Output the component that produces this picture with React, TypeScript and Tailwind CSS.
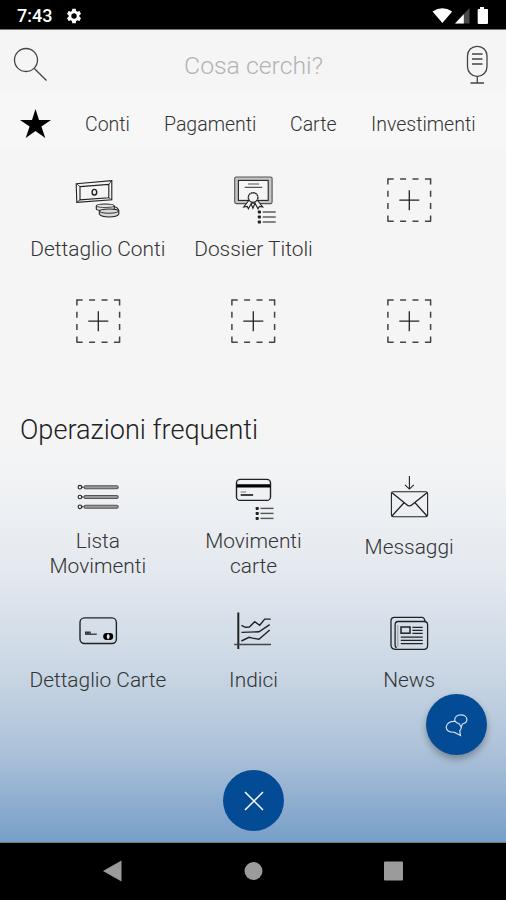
import type { ReactNode } from "react";

function Icon({ children }: { children: ReactNode }) {
  return (
    <svg width="60" height="60" viewBox="0 0 60 60" fill="none" stroke="#222" strokeWidth="1.1" className="block shrink-0">
      {children}
    </svg>
  );
}

function Tile({ icon, label, gap = "pt-[7px]" }: { icon: ReactNode; label?: ReactNode; gap?: string }) {
  return (
    <div className="flex flex-col items-center">
      {icon}
      {label && <div className={`${gap} text-center text-[20.9px] leading-[25px] font-light whitespace-nowrap text-[#333]`}>{label}</div>}
    </div>
  );
}

const AddIcon = () => (
  <Icon>
    <g strokeDasharray="6 6.4" stroke="#444" strokeWidth="1.5">
      <path d="M8.7 8.9H52M8.7 51.2H52" />
      <path d="M8.9 8.5V51.5M51.6 8.5V51.5" strokeDasharray="6 6.3" />
    </g>
    <path d="M20.3 30.2H40.3M30.3 20.2V40.2" stroke="#222" strokeWidth="1.3" />
  </Icon>
);

const MoneyIcon = () => (
  <Icon>
    <path d="M8.2 13.8 43.8 10.6V29.8L8.8 32.4Z" />
    <path d="M12 16.600 40.800 14.400V27.800L12 29.800Z" />
    <path d="m8.600 13.800 3.400 2.800M43.600 10.800l-2.800 3.600M43.600 29.800l-2.800-2M8.800 32.300l3.200-2.500" strokeWidth=".8" />
    <ellipse cx="26.400" cy="22.200" rx="2.300" ry="2.800" strokeWidth="1.4" />
    <path d="M28.300 36c0-2.600 18-2.600 18 0v3c0 2-18 2-18 0Z" fill="#e4e4e4" />
    <path d="M28.600 36.400c3 1.500 14 1.500 17.500 0" strokeWidth=".8" />
    <path d="M31.300 41c1-2.500 18-3 19.500 0v3c-2 4-17 4-19.500 0Z" fill="#d8d8d8" />
    <path d="M31.800 41.800c4 2 15 2 18.600-.3" strokeWidth=".9" />
    <path d="M45.800 36.500c3 .6 4.700 2 5 4.500" />
  </Icon>
);

const BulletRows = ({ x, y, step }: { x: number; y: number; step: number }) => (
  <>
    {[0, 1, 2].map((i) => (
      <g key={i}>
        <rect x={x - 1.6} y={y + i * step - 1.5} width="3.2" height="3" rx=".8" fill="#222" stroke="none" />
        <path d={`M${x + 3.3} ${y + i * step}h13`} strokeWidth="1.4" stroke="#555" />
      </g>
    ))}
  </>
);

const CertificateIcon = () => (
  <Icon>
    <g transform="translate(.7 0)">
      <rect x="11" y="7" width="37.4" height="26.6" rx="1.5" fill="#c4c4c4" stroke="#555" />
      <rect x="14.7" y="10.4" width="29.8" height="20" fill="#f5f5f5" />
      <path d="M24.3 14h11M21 17.4h17.5" strokeWidth="1.2" stroke="#555" />
      <path d="m25.5 30-5.5 7 3.5-.6 1.2 2.4 3.5-6.6M33.5 30l5.5 7-3.3-.6-1.4 2.4-3.5-6.6M27.5 34l1.7 4.3L31 34" fill="#f5f5f5" strokeWidth="1.1" />
      <circle cx="29.4" cy="27.5" r="4.8" fill="#f5f5f5" strokeWidth="1.4" strokeDasharray="1.8 .4" />
      <BulletRows x={35.7} y={42} step={5} />
    </g>
  </Icon>
);

const ListIcon = () => (
  <Icon>
    {[20.2, 30, 39.8].map((y) => (
      <g key={y}>
        <circle cx="11.9" cy={y} r="1.8" />
        <path d={`M13.7 ${y}h2`} />
        <rect x="16" y={y - 1.5} width="34.2" height="3" rx="1.5" fill="#999" stroke="#555" />
      </g>
    ))}
  </Icon>
);

const CardMovesIcon = () => (
  <Icon>
    <g transform="translate(.7 0)">
      <rect x="12.8" y="12.4" width="34" height="21" rx="3.5" strokeWidth="1.4" />
      <path d="M12.8 18.8h34" strokeWidth="3.2" stroke="#000" />
      <path d="M17 25h5.5" stroke="#888" />
      <path d="M17 28h12.4" strokeWidth="1.7" />
      <BulletRows x={33.5} y={41.4} step={5} />
    </g>
  </Icon>
);

const MailIcon = () => (
  <Icon>
    <path d="M30.4 9V21.9M26 17.8l4.4 4.300 4.400-4.300" />
    <rect x="12.400" y="24.700" width="36.200" height="25" rx="1.800" />
    <path d="m13 25.700 14.500 11.800q2.900 2.800 5.800 0L48 25.700M13 49 25 35.700M48 49 36 35.700" strokeWidth="1.3" />
  </Icon>
);

const CardIcon = () => (
  <Icon>
    <rect x="12" y="14.9" width="36.4" height="25.6" rx="4.5" strokeWidth="1.4" />
    <path d="M17 29.6h5.7" strokeWidth="2.4" strokeDasharray="1.8 .3" />
    <path d="M17 31.2h11.8" strokeWidth="1.2" />
    <ellipse cx="38.6" cy="33.5" rx="3.4" ry="3.4" fill="#000" stroke="none" />
    <ellipse cx="41.8" cy="33.5" rx="3.4" ry="3.4" fill="#000" stroke="none" />
    <ellipse cx="40.2" cy="33.5" rx="1.4" ry="2.5" fill="#dfe6ee" stroke="none" />
  </Icon>
);

const ChartIcon = () => (
  <Icon>
    <g transform="translate(.7 0)">
      <path d="M14.6 9.5V46" strokeWidth="2" />
      <path d="M10.5 41.5H47.3" stroke="#444" strokeWidth="1.3" />
      <path d="m17.7 22.3 4 2 4-.2 5.3-5.4 5 3.6 5-6.2h6M17.7 29.4l17.6-.6L46 21.6M17.7 38l7.6-3.7 3.7.8 6.3 1.2L46 27" strokeWidth="1.4" />
    </g>
  </Icon>
);

const NewsIcon = () => (
  <Icon>
    <path d="M16 46.3q-4-.5-4-4V18q0-3.7 3.5-3.7H43q2.4 0 3 4M17.7 44.5q-1.6 0-1.6-3V22q0-3.5 3-3.5H45q3.6 0 3.6 3.5v20.5q0 3.8-3.6 3.8H15.5" strokeWidth="1.3" />
    <path d="M18.8 22v21.5" strokeWidth=".8" stroke="#888" />
    <rect x="22" y="24" width="9" height="6.2" strokeWidth="1.5" />
    <path d="M33.4 24.4h10.3M33.4 27.4h10.3M33.4 30.4h10.3M21.8 34.2h22M21.8 37.4h22M21.8 40.6h22" strokeWidth="1.3" />
  </Icon>
);

function StatusBar() {
  return (
    <div className="flex h-[30px] shrink-0 items-center border-b border-[#777] bg-black pt-[3px] pl-[17px] text-white">
      <span className="w-[35px] text-[18px] leading-none font-medium">7:43</span>
      <svg className="ml-[13px]" width="18" height="18" viewBox="0 0 24 24" fill="#fff">
        <path d="M19.14 12.94c.04-.3.06-.61.06-.94 0-.32-.02-.64-.07-.94l2.03-1.58a.49.49 0 0 0 .12-.61l-1.92-3.32a.49.49 0 0 0-.59-.22l-2.39.96c-.5-.38-1.03-.7-1.62-.94l-.36-2.54a.48.48 0 0 0-.48-.41h-3.84a.48.48 0 0 0-.47.41l-.36 2.54c-.59.24-1.13.57-1.62.94l-2.39-.96a.48.48 0 0 0-.59.22L2.74 8.87a.48.48 0 0 0 .12.61l2.03 1.58c-.05.3-.09.63-.09.94s.02.64.07.94l-2.03 1.58a.49.49 0 0 0-.12.61l1.92 3.32c.12.22.37.29.59.22l2.39-.96c.5.38 1.03.7 1.62.94l.36 2.54c.05.24.24.41.48.41h3.84c.24 0 .44-.17.47-.41l.36-2.54c.59-.24 1.13-.56 1.62-.94l2.39.96c.22.08.47 0 .59-.22l1.92-3.32a.48.48 0 0 0-.12-.61l-2.01-1.58zM12 15.6a3.6 3.6 0 1 1 0-7.2 3.6 3.6 0 0 1 0 7.2z" />
      </svg>
      <svg className="mr-[15px] ml-auto" width="60" height="20" viewBox="0 0 60 20">
        <path d="M1.5 5.5Q11.3-1 21.2 5.5L11.4 17Z" fill="#fff" />
        <path d="M38.5 2V17.5H24Z" fill="#4a4a4a" />
        <path d="M32.8 8.2V17.5H24Z" fill="#fff" />
        <path d="M49 1h4v2h3.2q.8 0 .8.8V17q0 1-1 1H47.7q-1 0-1-1V3.8q0-.8.8-.8H49Z" fill="#fff" />
      </svg>
    </div>
  );
}

export default function App() {
  return (
    <div className="relative flex h-[900px] w-[506px] flex-col overflow-hidden bg-[#f5f5f5] font-['Roboto',sans-serif]">
      <StatusBar />
      <main className="flex flex-1 flex-col bg-[linear-gradient(to_bottom,#f5f5f5_0px,#f5f5f5_400px,#f1f3f5_450px,#e4e9ef_540px,#cad7e4_640px,#adc2d9_720px,#779fc8_812px)]">
        <div className="flex h-[62px] shrink-0 items-center">
          <svg className="ml-[10px] shrink-0" width="40" height="40" viewBox="0 0 40 40" fill="none" stroke="#444" strokeWidth="1.3">
            <circle cx="16" cy="19" r="11.5" />
            <path d="M24.3 27.5 36.5 39.5" />
          </svg>
          <div className="flex-1 pt-[9px] pr-[5px] text-center text-[24.8px] leading-[30px] font-light text-[#b3b3b3]">
            <span>Cosa cerchi?</span>
          </div>
          <svg className="mr-[14px] shrink-0" width="30" height="46" viewBox="0 0 30 46" fill="none" stroke="#444" strokeWidth="1.3">
            <rect x="5.5" y="8.3" width="19.5" height="30" rx="9.5" />
            <path d="M10 16H20.5M10 21H20.5M10 26H20.5M15.3 38.3V45M8.5 45H22" />
          </svg>
        </div>
        <nav className="flex h-[57px] shrink-0 items-center bg-[#f7f7f7] pt-[6px] text-[19.5px] font-light text-[#333]">
          <svg className="ml-[20px] shrink-0" width="31" height="30" viewBox="0 0 31 30">
            <path d="M15.5 0 19 11H31L21.4 17.5 25.3 29 15.5 22 5.7 29 9.6 17.5 0 11H12Z" fill="#000" />
          </svg>
          <span className="ml-[34px] w-[79px] pt-[2px]">Conti</span>
          <span className="w-[126px] pt-[2px]">Pagamenti</span>
          <span className="w-[81px] pt-[2px]">Carte</span>
          <span className="pt-[2px]">Investimenti</span>
        </nav>

        <section className="grid h-[256px] shrink-0 grid-cols-3 grid-rows-[121px_121px] pt-[21px] pr-[19px] pl-5">
          <Tile icon={<MoneyIcon />} label="Dettaglio Conti" />
          <Tile icon={<CertificateIcon />} label="Dossier Titoli" />
          <Tile icon={<AddIcon />} />
          <Tile icon={<AddIcon />} />
          <Tile icon={<AddIcon />} />
          <Tile icon={<AddIcon />} />
        </section>

        <h2 className="h-[62px] shrink-0 pt-[9px] pl-5 text-[27.1px] leading-[33px] font-light text-[#222]">Operazioni frequenti</h2>

        <section className="grid shrink-0 grid-cols-3 grid-rows-[136px_100px] pr-[19px] pl-5">
          <Tile icon={<ListIcon />} gap="pt-[2px]" label={<>Lista<br />Movimenti</>} />
          <Tile icon={<CardMovesIcon />} gap="pt-[2px]" label={<>Movimenti<br />carte</>} />
          <Tile icon={<MailIcon />} gap="pt-[8px]" label="Messaggi" />
          <Tile icon={<CardIcon />} gap="pt-[5px]" label="Dettaglio Carte" />
          <Tile icon={<ChartIcon />} gap="pt-[5px]" label="Indici" />
          <Tile icon={<NewsIcon />} gap="pt-[5px]" label="News" />
        </section>

        <button className="mt-auto mb-[11px] ml-px flex size-[61px] items-center justify-center self-center rounded-full bg-[#044b96]">
          <svg width="20" height="20" viewBox="0 0 20 20" stroke="#fff" strokeWidth="1.5">
            <path d="M1 1 19 19M19 1 1 19" />
          </svg>
        </button>
      </main>

      <button className="absolute top-[694px] left-[426px] flex size-[61px] items-center justify-center rounded-full bg-[#044b96] shadow-[0_4px_7px_rgba(0,0,0,0.3)]">
        <svg width="24" height="24" viewBox="0 0 24 24" fill="none" stroke="#d0def2" strokeWidth="1.2">
          <path d="M9.7 7.5C9.500 4 12 1.800 15.700 1.800s6.200 2 6.200 4.500-1.800 4.200-4.500 4.700l-1.200 3-2-3.200c-2-.3-3.500-1.300-4.500-3.300Z" />
          <path d="M10 8.500C5.500 8 1.200 10.500 1.200 14s3 5.700 7.800 5.200l6.500 3.300-.8-4.700c1.300-1.300 1.700-2.600 1.500-3.800" />
        </svg>
      </button>

      <footer className="flex h-[58px] shrink-0 items-center justify-center border-t border-[#777] bg-black pb-[2px]">
        <svg width="506" height="40" viewBox="0 0 506 40" fill="#9b9b9b">
          <path d="M121.5 9.5V30.5L103 20Z" />
          <circle cx="253.5" cy="20" r="9" />
          <rect x="384" y="10.5" width="19" height="19" rx="1" />
        </svg>
      </footer>
    </div>
  );
}
